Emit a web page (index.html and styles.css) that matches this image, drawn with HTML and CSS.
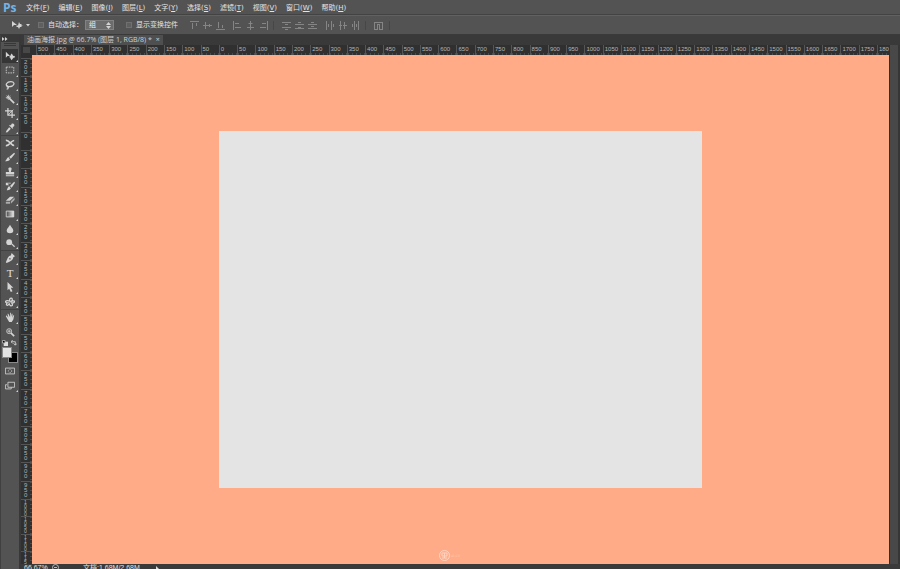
FILE: index.html
```
<!DOCTYPE html>
<html lang="zh-CN">
<head>
	<meta charset="UTF-8">
	<title>油画海报.jpg</title>
	<link rel="stylesheet" href="styles.css">
</head>
<body>
	<header class="menu">
		<span class="logo">Ps</span>
		<nav>
			<button>文件(<u>F</u>)</button>
			<button>编辑(<u>E</u>)</button>
			<button>图像(<u>I</u>)</button>
			<button>图层(<u>L</u>)</button>
			<button>文字(<u>Y</u>)</button>
			<button>选择(<u>S</u>)</button>
			<button>滤镜(<u>T</u>)</button>
			<button>视图(<u>V</u>)</button>
			<button>窗口(<u>W</u>)</button>
			<button>帮助(<u>H</u>)</button>
		</nav>
	</header>

	<div class="options">
		<button class="current" aria-label="移动工具">
			<svg width="20" height="10" viewBox="0 0 20 10"><path d="M1 1v6l2-2h3z"/><path d="M8 2l1 2h1.500v1.500l2-.5-2 1v1H9L8 9 7 7H5.500V5.500H7z"/><path d="M15 4h4l-2 2.500z"/></svg>
		</button>
		<label class="auto"><input type="checkbox"><span>自动选择：</span></label>
		<span class="pick">
			<select aria-label="自动选择对象"><option>组</option><option>图层</option></select>
			<svg width="5" height="7" viewBox="0 0 5 7"><path d="M0 3l2.500-3L5 3zM0 4h5L2.500 7z"/></svg>
		</span>
		<label class="show"><input type="checkbox"><span>显示变换控件</span></label>
		<div class="aligns">
			<button aria-label="顶对齐"><svg viewBox="0 0 9 9"><path d="M0 .5h9M2.500 2v6M6.500 2v3" /></svg></button>
			<button aria-label="垂直居中对齐"><svg viewBox="0 0 9 9"><path d="M0 4.500h9M2.500 1v7M6.500 3v3"/></svg></button>
			<button aria-label="底对齐"><svg viewBox="0 0 9 9"><path d="M0 8.500h9M2.500 1v6M6.500 4v3"/></svg></button>
		</div>
		<div class="aligns">
			<button aria-label="左对齐"><svg viewBox="0 0 9 9"><path d="M.5 0v9M2 2.500h4M2 6.500h6"/></svg></button>
			<button aria-label="水平居中对齐"><svg viewBox="0 0 9 9"><path d="M4.500 0v9M2.500 2.500h4M1 6.500h7"/></svg></button>
			<button aria-label="右对齐"><svg viewBox="0 0 9 9"><path d="M8.500 0v9M3 2.500h4M1 6.500h6"/></svg></button>
		</div>
		<div class="aligns line">
			<button aria-label="按顶分布"><svg viewBox="0 0 9 9"><path d="M0 1.500h9M3 3.500h3M0 6.500h9M3 8.500h3"/></svg></button>
			<button aria-label="垂直居中分布"><svg viewBox="0 0 9 9"><path d="M3 1.500h3M0 3.500h9M3 6.500h3M0 7.500h9"/></svg></button>
			<button aria-label="按底分布"><svg viewBox="0 0 9 9"><path d="M3 1.500h3M0 3.500h9M3 5.500h3M0 7.500h9"/></svg></button>
		</div>
		<div class="aligns">
			<button aria-label="按左分布"><svg viewBox="0 0 9 9"><path d="M1.500 0v9M3.500 3v3M6.500 0v9M8.500 3v3"/></svg></button>
			<button aria-label="水平居中分布"><svg viewBox="0 0 9 9"><path d="M2.500 0v9M1 4.500h3M6.500 1v7M5 4.500h4"/></svg></button>
			<button aria-label="按右分布"><svg viewBox="0 0 9 9"><path d="M1.500 3v3M3.500 0v9M5.500 3v3M7.500 0v9"/></svg></button>
		</div>
		<div class="aligns line last">
			<button aria-label="自动对齐图层"><svg viewBox="0 0 9 9"><path d="M0 1.500h9M.5 1v8M3.500 3v6M5.500 3v6M8.500 1v8M0 8.500h3M6 8.500h3M3 3.500h3"/></svg></button>
		</div>
	</div>

	<div class="main">
		<aside class="tools">
			<button class="fold" aria-label="折叠面板"><svg width="6" height="4" viewBox="0 0 6 4"><path d="M0 0l2.500 2L0 4zM3 0l2.500 2L3 4z"/></svg></button>
			<div class="grip"></div>
			<div class="group g1">
				<button class="on" aria-label="移动"><svg viewBox="0 0 12 12"><path d="M1 1v7l2-2h3z"/><path d="M8 3l1.500 2v1h1V5L12 7l-1.500 2V8h-1v1L8 11 6.500 9V8h-1V6h1V5z"/></svg></button>
				<button aria-label="矩形选框"><svg class="stroke" viewBox="0 0 12 12"><path stroke-dasharray="2 1" d="M1.500 2.500h9v7h-9z"/></svg></button>
				<button aria-label="套索"><svg class="stroke" viewBox="0 0 12 12"><path stroke-width="1.500" d="M3 8C0 6 2 2 7 2c4 0 5 3 2 5-2 1-5 1-6 0-1 1 0 2 1 2 0 1-1 2-2 2"/></svg></button>
				<button aria-label="魔棒"><svg class="stroke" viewBox="0 0 12 12"><path d="M4 1v6M1 4h6M2 2l4 4M6 2L2 6"/><path stroke-width="2" d="M5 5l6 6"/></svg></button>
				<button aria-label="裁剪"><svg class="stroke" viewBox="0 0 12 12"><path stroke-width="1.500" d="M3.500 0v8.500H12M0 3.500h8.500V12"/><path d="M4 8l6-6"/></svg></button>
				<button aria-label="吸管"><svg viewBox="0 0 12 12"><path d="M8 1c2-1 4 1 3 3L9 5l1 1-1 1-4-4 1-1 1 1z"/><path d="M5 5l2 2-4 4-2 .5.500-2z"/></svg></button>
			</div>
			<div class="group g2">
				<button aria-label="修复画笔"><svg class="stroke" viewBox="0 0 12 12"><path stroke-width="2" d="M1 3c4-1 6 6 10 6M1 9c4 1 6-6 10-6"/></svg></button>
				<button aria-label="画笔"><svg viewBox="0 0 12 12"><path d="M11 1l1 1-5 6-2-2zM4 6l2 3c-1 2-4 2-6 2 2-1 2-4 4-5z"/></svg></button>
				<button aria-label="仿制图章"><svg viewBox="0 0 12 12"><path d="M4 2c0-2 4-2 4 0L7 6h4v3H1V6h4zM1 10h10v1H1z"/></svg></button>
				<button aria-label="历史记录画笔"><svg viewBox="0 0 12 12"><path d="M11 1l1 1-4 6-2-2zM5 6l2 3c-1 2-4 2-5 2 1-1 1-4 3-5zM1 2h6v1H3l2 2H1z"/></svg></button>
				<button aria-label="橡皮擦"><svg viewBox="0 0 12 12"><path d="M6 2h5L6 7H1z"/><path fill="#aaa" d="M11.500 3v3L7 10.500v-3zM1 8h5v2.500H1z"/></svg></button>
				<button aria-label="渐变"><svg viewBox="0 0 12 12"><defs><linearGradient id="fade"><stop stop-color="#444"/><stop offset="1" stop-color="#eee"/></linearGradient></defs><path fill="url(#fade)" stroke="#ddd" d="M1.500 2.500h9v7h-9z"/></svg></button>
				<button aria-label="模糊"><svg viewBox="0 0 12 12"><path d="M6 1c1 3 4 4 4 7 0 4-8 4-8 0 0-3 3-4 4-7z"/></svg></button>
				<button aria-label="减淡"><svg viewBox="0 0 12 12"><circle cx="5" cy="5" r="3.500"/><path d="M7 7l1-1 4 4-1 1z"/></svg></button>
			</div>
			<div class="group g3">
				<button aria-label="钢笔"><svg viewBox="0 0 12 12"><path fill-rule="evenodd" d="M8 0l4 4-2 1c0 3-3 5-8 7l-1-1c2-4 3-8 6-8zM6 6a1 1 0 1 0 1 1z"/></svg></button>
				<button aria-label="横排文字" class="type">T</button>
				<button aria-label="路径选择"><svg viewBox="0 0 12 12"><path d="M3 0v10l2-2 2 4 2-1-2-4h3z"/></svg></button>
				<button aria-label="自定形状"><svg class="stroke" viewBox="0 0 12 12"><path stroke-width="1.500" d="M6 5c-2-5 5-5 2 0 5-2 4 3 0 2 3 4-2 5-3 1-2 4-5 1-2-1-4 0-3-4 3-2z"/></svg></button>
			</div>
			<div class="group g4">
				<button aria-label="抓手"><svg viewBox="0 0 12 12"><path d="M1 5l1-1 2 3-1-5h1l2 4V1h1v5l1-4h1v5l1-3h1l-1 5-2 3H5z"/></svg></button>
				<button aria-label="缩放" class="plain"><svg class="stroke" viewBox="0 0 12 12"><circle cx="5" cy="5" r="3"/><path d="M3 5h4M5 3v4"/><path stroke-width="2" d="M7 7l4 4"/></svg></button>
			</div>
			<div class="colors">
				<button aria-label="默认颜色"><svg width="6" height="6" viewBox="0 0 7 7"><path fill="#ddd" d="M2 2h5v5H2z"/><path fill="#000" stroke="#bbb" d="M.5.5h3v3h-3z"/></svg></button>
				<button aria-label="切换颜色"><svg class="stroke" width="6" height="6" viewBox="0 0 7 7"><path d="M2 0L0 2l2 2M0 2h5v4M3 4l2 2 2-2"/></svg></button>
			</div>
			<div class="swatch">
				<button class="back" aria-label="背景色"></button>
				<button class="front" aria-label="前景色"></button>
			</div>
			<div class="group g5">
				<button aria-label="快速蒙版" class="plain"><svg class="stroke" viewBox="0 0 12 12"><path d="M.5 2.500h11v7H.5z"/><circle cx="6" cy="6" r="2" stroke-dasharray="1 1"/></svg></button>
				<button aria-label="屏幕模式"><svg class="stroke" viewBox="0 0 12 12"><path d="M3.500 1.500h8v6h-8zM2.500 4.500h-2v5h7v-2"/></svg></button>
			</div>
		</aside>

		<section class="doc">
			<div class="tabs">
				<a href="#paper" class="tab">油画海报.jpg @ 66.7% (图层 1, RGB/8) * <span>×</span></a>
			</div>
			<div class="view">
				<div class="corner"></div>
				<div class="ruler top" id="top"></div>
				<div class="side"></div>
				<div class="ruler left" id="left"></div>
				<div class="stage">
					<div class="paper" id="paper"></div>
					<div class="mark">
						<svg width="11" height="11" viewBox="0 0 11 11"><circle cx="5.500" cy="5.500" r="5"/><path d="M3 3v3h5V3zM5.500 3v5M3 8h5"/></svg>
						<span>ui.cn</span>
					</div>
				</div>
				<div class="scroll"></div>
			</div>
			<footer class="status">
				<span class="zoom">66.67%</span>
				<svg width="7" height="7" viewBox="0 0 7 7"><circle cx="3.500" cy="3.500" r="3"/><path d="M2 3.500h3"/></svg>
				<span class="size">文档:1.68M/2.68M</span>
				<i></i>
			</footer>
		</section>
	</div>
<script>
	//标尺，每50一个刻度
	function ruler(id,from,to){
		var wrap = document.getElementById(id);
		for(var i=from;i<=to;i+=50){
			var span = document.createElement('span');
			span.textContent = Math.abs(i);
			//四位数竖排放不下，缩小一点
			if(i >= 1000){
				span.className = 'long';
			}
			wrap.appendChild(span);
		}
	}
	ruler('top',-500,1800);
	ruler('left',-200,1150);
</script>
</body>
</html>
```
FILE: styles.css
```
* {
	box-sizing: border-box;
}
body {
	margin: 0;
	height: 100vh;
	display: flex;
	flex-direction: column;
	overflow: hidden;
	background: #535353;
	color: #e4e4e4;
	font: 7px/10px "DejaVu Sans", "Noto Sans CJK SC", sans-serif;
}
button {
	margin: 0;
	padding: 0;
	border: none;
	background: none;
	color: inherit;
	font: inherit;
}
svg {
	display: block;
	fill: #d4d4d4;
}
.menu {
	height: 15px;
	flex: none;
	display: flex;
	align-items: center;
	padding-top: 1px;
	border-bottom: 1px solid #434343;
}
.logo {
	width: 26px;
	padding-left: 3px;
	font: bold 12px/14px "Open Sans", sans-serif;
	color: #74b4e4;
}
.menu nav {
	display: flex;
	gap: 9px;
}
.options {
	height: 20px;
	flex: none;
	display: flex;
	align-items: center;
	border-top: 1px solid #616161;
	border-bottom: 1px solid #3a3a3a;
}
.current {
	width: 38px;
	padding-left: 11px;
}
.options label {
	display: flex;
	align-items: center;
	gap: 4px;
}
.options input {
	appearance: none;
	width: 6px;
	height: 6px;
	margin: 0;
	border: 1px solid #707070;
	background: #5f5f5f;
}
.auto {
	width: 47px;
	white-space: nowrap;
}
.pick {
	display: flex;
	align-items: center;
	width: 29px;
	height: 10px;
	padding-right: 2px;
	border: 1px solid #828282;
	background: #6c6c6c;
}
.pick select {
	appearance: none;
	flex: 1;
	min-width: 0;
	height: 8px;
	padding: 0 0 0 3px;
	border: none;
	background: none;
	color: #eee;
	font: inherit;
	line-height: 8px;
}
.show {
	width: 56px;
	margin-left: 12px;
	white-space: nowrap;
}
.aligns {
	display: flex;
	gap: 4px;
	padding-left: 8px;
}
.options .aligns svg {
	width: 9px;
	height: 9px;
	fill: none;
	stroke: #858585;
}
.aligns.line {
	margin-left: 5px;
	border-left: 1px solid #474747;
}
.aligns.last {
	padding-right: 6px;
	border-right: 1px solid #474747;
}
.main {
	flex: 1;
	min-height: 0;
	display: flex;
}
.tools {
	width: 21px;
	flex: none;
	display: flex;
	flex-direction: column;
	border-right: 2px solid #383838;
	border-left: 1px solid #404040;
}
.fold {
	height: 7px;
	flex: none;
	padding-left: 1px;
	background: #393939;
}
.grip {
	height: 3px;
	margin: 1px 3px 3px;
	border-top: 1px solid #383838;
	border-bottom: 1px solid #383838;
}
.group {
	display: grid;
	grid-auto-rows: 1fr;
	border-bottom: 1px solid #424242;
}
.group button {
	position: relative;
	display: flex;
	align-items: center;
	justify-content: center;
	margin: 0 1px;
}
.group button svg {
	width: 10px;
	height: 10px;
}
.group button::after {
	position: absolute;
	right: 0;
	bottom: 1px;
	content: "";
	border-left: 2px solid transparent;
	border-bottom: 2px solid #d4d4d4;
}
.group .plain::after {
	display: none;
}
.group .on {
	background: #363636;
}
svg.stroke {
	fill: none;
	stroke: #d4d4d4;
}
.group .type {
	font: 11px/12px "Liberation Serif", serif;
}
.g1 {
	height: 87px;
}
.g2 {
	height: 115px;
}
.g3 {
	height: 59px;
}
.g4 {
	height: 29px;
	border: none;
}
.g5 {
	height: 30px;
	border: none;
}
.colors {
	display: flex;
	justify-content: space-between;
	padding: 1px 2px 0 1px;
}
.swatch {
	position: relative;
	height: 16px;
	margin: 1px 1px 0;
}
.swatch button {
	position: absolute;
	width: 10px;
	height: 11px;
	border: 1px solid #8a8a8a;
}
.swatch .front {
	left: 0;
	top: 0;
	background: #e4e4e4;
}
.swatch .back {
	right: 0;
	bottom: 0;
	background: #000;
}
.doc {
	flex: 1;
	min-width: 0;
	display: flex;
	flex-direction: column;
}
.tabs {
	height: 10px;
	flex: none;
	display: flex;
	background: #393939;
}
.tab {
	margin-left: 3px;
	padding: 0 3px;
	background: #4f4f4f;
	color: #d0d0d0;
	font-family: "Open Sans", "Noto Sans CJK SC", sans-serif;
	text-decoration: none;
	white-space: nowrap;
}
.tab span {
	padding-left: 2px;
}
.view {
	flex: 1;
	min-height: 0;
	display: grid;
	grid-template-columns: 11px 1fr 11px;
	grid-template-rows: 10px 1fr;
}
.corner {
	border: 2px solid #303030;
	background: #484848;
}
.ruler {
	display: flex;
	overflow: hidden;
	background: #303030;
	color: #b4b4b4;
	font: 6px/9px "Liberation Sans", sans-serif;
}
.ruler span {
	flex: 1;
	min-width: 0;
	min-height: 0;
}
.top {
	padding-left: 4px;
}
.top span {
	padding-left: 1px;
	border-left: 1px solid #555;
	background: repeating-linear-gradient(90deg, #4c4c4c 0 1px, transparent 1px 4px) 0 100% / 100% 2px no-repeat;
}
.top span:last-child {
	flex: 0 0 12px;
}
.left {
	flex-direction: column;
	padding-top: 3px;
	line-height: 5px;
}
.left span {
	padding: 1px 4px 0 3px;
	border-top: 1px solid #555;
	background: repeating-linear-gradient(#4c4c4c 0 1px, transparent 1px 4px) 100% 0 / 2px 100% no-repeat;
	word-break: break-all;
}
.left .long {
	padding-top: 0;
	font-size: 5px;
	line-height: 4px;
}
.left span:last-child {
	flex: 0 0 13px;
}
.side,
.scroll {
	background: #484848;
	border-left: 1px solid #303030;
	border-right: 2px solid #363636;
}
.stage {
	position: relative;
	display: flex;
	align-items: center;
	justify-content: center;
	background: #ffab87;
}
.paper {
	width: 56.4%;
	aspect-ratio: 483 / 356;
	background: #e4e4e4;
}
.mark {
	position: absolute;
	left: 0;
	right: 0;
	bottom: 3px;
	display: flex;
	align-items: center;
	justify-content: center;
	gap: 1px;
	padding-right: 22px;
	color: #ffc7ae;
	font-size: 4px;
}
.mark svg {
	fill: none;
	stroke: #ffd3c0;
}
.status {
	height: 5px;
	flex: none;
	display: flex;
	align-items: flex-start;
	overflow: hidden;
	background: #3a3a3a;
	font-family: "Liberation Sans", "Noto Sans CJK SC", sans-serif;
	line-height: 8px;
}
.zoom {
	width: 28px;
	margin-left: 3px;
}
.status svg {
	fill: none;
	stroke: #bbb;
}
.size {
	width: 73px;
	padding-left: 24px;
	white-space: nowrap;
}
.status i {
	margin-left: 24px;
	margin-top: 2px;
	border: 3px solid transparent;
	border-left-color: #ddd;
}
```
